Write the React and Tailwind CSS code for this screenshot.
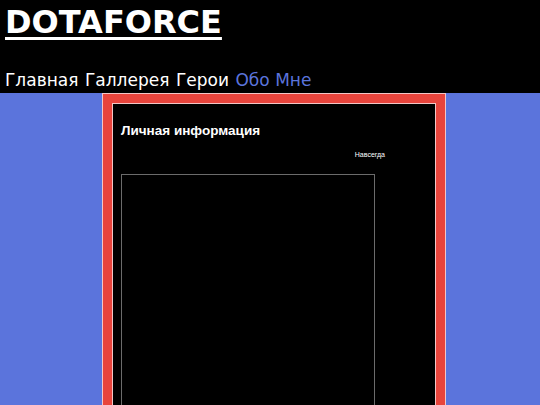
export default function App() {
  return (
    <div className="w-[540px] h-[405px] overflow-hidden bg-[#5b74dc]" style={{ fontFamily: '"DejaVu Sans", sans-serif' }}>
      <header className="bg-black h-[93px] pl-[5px] pt-[3px]">
        <h1 className="text-[32px] leading-[38px] font-bold text-white underline decoration-[3px] underline-offset-[4px]">DOTAFORCE</h1>
        <nav className="mt-[28px] text-[17px] leading-[22px] text-white flex gap-[6.5px]">
          <span>Главная</span>
          <span>Галлерея</span>
          <span>Герои</span>
          <span className="text-[#5b74dc]">Обо Мне</span>
        </nav>
      </header>
      <div className="ml-[102px] w-[344px] h-[400px] bg-[#e8443c] border border-[#f3c6c6] p-[9px] border-b-0 pb-0">
        <div className="h-full bg-black border border-[#f3c6c6] border-b-0 pl-[8px] pt-[19px]" style={{ fontFamily: '"Liberation Sans", sans-serif' }}>
          <h2 className="text-[13.5px] leading-[16px] font-bold text-white">Личная информация</h2>
          <div className="w-[264px] flex justify-end mt-[11px]">
            <span className="text-[7px] leading-[9px] text-white">Навсегда</span>
          </div>
          <div className="mt-[15px] w-[254px] h-[300px] border border-[#6b6b6b] border-b-0"></div>
        </div>
      </div>
    </div>
  );
}
